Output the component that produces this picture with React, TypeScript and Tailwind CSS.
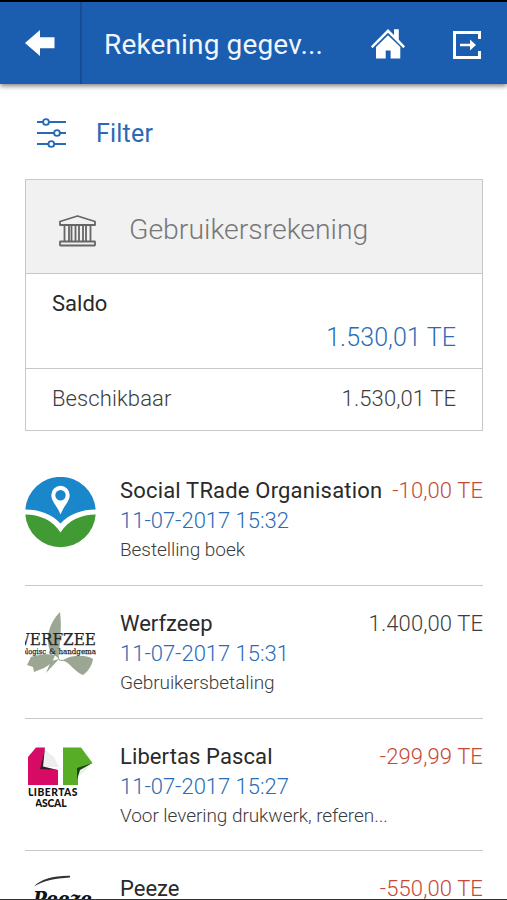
import type { ReactNode } from 'react'

type Transaction = {
  name: string
  date: string
  description: string
  amount: string
  negative: boolean
  nameClass: string
  logo: ReactNode
}

const transactions: Transaction[] = [
  {
    name: 'Social TRade Organisation',
    date: '11-07-2017 15:32',
    description: 'Bestelling boek',
    amount: '-10,00 TE',
    negative: true,
    nameClass: 'tracking-[0.18px]',
    logo: <StroLogo />,
  },
  {
    name: 'Werfzeep',
    date: '11-07-2017 15:31',
    description: 'Gebruikersbetaling',
    amount: '1.400,00 TE',
    negative: false,
    nameClass: 'tracking-normal',
    logo: <WerfzeepLogo />,
  },
  {
    name: 'Libertas Pascal',
    date: '11-07-2017 15:27',
    description: 'Voor levering drukwerk, referen...',
    amount: '-299,99 TE',
    negative: true,
    nameClass: 'tracking-[0.1px]',
    logo: <LibertasLogo />,
  },
  {
    name: 'Peeze',
    date: '11-07-2017 15:25',
    description: 'Gebruikersbetaling',
    amount: '-550,00 TE',
    negative: true,
    nameClass: 'tracking-normal',
    logo: <PeezeLogo />,
  },
]

export default function App() {
  return (
    <div className="h-[900px] w-[507px] overflow-hidden border-t-2 border-b border-t-black border-b-[#333] bg-white font-['Roboto',sans-serif] text-[#2a2a2a]">
      <Header />
      <main className="pr-[24px] pl-[25px]">
        <button className="mt-[31px] flex h-9 items-center pl-[11px] text-[#2a69b3]">
          <FilterIcon />
          <span className="ml-[29px] pt-[2px] text-[25px] leading-9 tracking-[0.2px]">Filter</span>
        </button>
        <AccountCard />
        <ul className="mt-[22px]">
          {transactions.map((t) => (
            <TransactionRow key={t.name} transaction={t} />
          ))}
        </ul>
      </main>
    </div>
  )
}

function Header() {
  return (
    <header className="flex h-[82px] items-center bg-[#1b5dae] text-white shadow-[0_2px_5px_rgba(0,0,0,0.5)]">
      <button className="flex h-full w-[82px] items-center border-r-2 border-[#174d92] pl-[25px]">
        <svg width="30" height="26" viewBox="0 0 30 26" fill="currentColor">
          <path d="M0 13 15 0V7.2H29.5V18.3H15V26Z" />
        </svg>
      </button>
      <h1 className="w-[289px] pt-[3px] pl-[22px] text-[28px] font-normal leading-[34px] tracking-[0.15px] whitespace-nowrap text-[#f0f6ff]">
        Rekening gegev...
      </h1>
      <svg className="mt-[2px]" width="34" height="30" viewBox="0 0 34 30" fill="currentColor">
        <path d="M1.5 19.2 0 17.3 17 0l6 6V.2h4.8v10.6L34 17.3l-1.6 1.9L17 3.8Z" />
        <path d="M5 17.9 17 6.3 29.3 17.9V29.5H19.6V21.5H14.7V29.5H5Z" />
      </svg>
      <svg className="mt-[3px] ml-[48px]" width="28" height="28" viewBox="0 0 28 28" fill="none">
        <path d="M26.5 8V1.5H1.5V26.5H26.5V20" stroke="currentColor" strokeWidth="3" />
        <path d="M7 12.8H17V8.5L23 14 17 19.5V15.2H7Z" fill="currentColor" />
      </svg>
    </header>
  )
}

function FilterIcon() {
  return (
    <svg className="mb-[1px]" width="31" height="30" viewBox="0 0 31 30" fill="none" stroke="currentColor" strokeWidth="1.9">
      <path d="M1 4H7M13 4H30M1 15H18M24 15H30M1 26H12M18 26H30" />
      <circle cx="10" cy="4" r="2.9" />
      <circle cx="21" cy="15" r="2.9" />
      <circle cx="15.3" cy="26" r="2.9" />
    </svg>
  )
}

function AccountCard() {
  return (
    <section className="mt-[28px] border border-[#c8c8c8]">
      <div className="flex h-[94px] items-center border-b border-[#c8c8c8] bg-[#f1f1f1] pt-1 pl-[33px] text-[#777]">
        <BankIcon />
        <h2 className="ml-[33px] pt-[2px] text-[28.4px] font-light leading-9">Gebruikersrekening</h2>
      </div>
      <div className="flex h-[95px] flex-col border-b border-[#c8c8c8] px-[26px] pt-[15px]">
        <span className="text-[22px] leading-[30px]">Saldo</span>
        <span className="mt-[2px] self-end text-[25px] font-light leading-[34px] tracking-[0.1px] text-[#2b6cb5]">
          1.530,01 TE
        </span>
      </div>
      <div className="flex h-[61px] items-center justify-between px-[26px] pb-[1px] text-[22px] font-light leading-[30px] tracking-[0.1px] text-[#3c3c3c]">
        <span>Beschikbaar</span>
        <span>1.530,01 TE</span>
      </div>
    </section>
  )
}

function BankIcon() {
  return (
    <svg className="mt-[4px] text-[#666]" width="37" height="32" viewBox="0 0 37 32" fill="none" stroke="currentColor" strokeWidth="1.8">
      <path d="M1 6.5 18.5 1 36 6.5V10H1Z" strokeLinejoin="round" />
      <path d="M5.5 10V26M10 10V26M12.5 10V26M16.5 10V26M20 10V26M24 10V26M27 10V26M31.5 10V26" />
      <rect x="1" y="26.5" width="35" height="4" rx="0.5" />
    </svg>
  )
}

function TransactionRow({ transaction: t }: { transaction: Transaction }) {
  return (
    <li className="flex h-[132.8px] border-b border-[#c8c8c8] pt-[23px]">
      <div className="mt-[1px] h-[71px] w-[71px] shrink-0">{t.logo}</div>
      <div className="ml-[24px] min-w-0 flex-1">
        <div className="flex justify-between text-[22px] leading-[30px] whitespace-nowrap">
          <span className={t.nameClass}>{t.name}</span>
          <span className={`font-light tracking-[0.1px] ${t.negative ? 'text-[#c64936]' : 'text-[#3c3c3c]'}`}>
            {t.amount}
          </span>
        </div>
        <div className="text-[22px] font-light leading-[30px] text-[#2b6cb5]">{t.date}</div>
        <div className="text-[19px] font-light leading-[28px] tracking-[-0.06px] text-[#3c3c3c]">{t.description}</div>
      </div>
    </li>
  )
}

function StroLogo() {
  return (
    <svg width="71" height="71" viewBox="0 0 71 71">
      <path d="M.3 32.5A35.3 35.3 0 0 1 70.7 32.5C57 32.5 44 37 35.5 46.5 27 37 14 32.5.3 32.5Z" fill="#1b87cb" />
      <path d="M.3 37.5C14 37.5 28 43 35.5 55.5 43 43 57 37.5 70.7 37.5A35.3 35.3 0 0 1 .3 37.5Z" fill="#419a34" />
      <path
        fillRule="evenodd"
        fill="#fff"
        d="M35.5 37.5C33 30 26.3 24.5 26.3 18a9.2 9.2 0 0 1 18.4 0C44.7 24.5 38 30 35.5 37.5ZM35.5 13a5.2 5.2 0 1 0 0 10.4 5.2 5.2 0 0 0 0-10.4Z"
      />
    </svg>
  )
}

function WerfzeepLogo() {
  return (
    <svg width="71" height="71" viewBox="0 0 71 71">
      <g fill="#9ba792">
        <path d="M35 2C24 13 20 28 25 41L33 48C35 34 37 18 35 2Z" />
        <path d="M30 45C22 43 11 45 6 47L2 55 8 57 9 62 19 58C25 55 29 50 30 45Z" />
        <path d="M26 51 21 63 34 49Z" />
        <path d="M32 41 34 50 42 51" fill="none" stroke="#9ba792" />
        <path d="M38 50C46 45 60 44 68 49C67 57 61 63 58 65C50 62 46 54 38 50Z" />
      </g>
      <g fill="#252525" stroke="#252525" strokeWidth="0.25" fontFamily="DejaVu Serif, serif">
        <text x="-11" y="34.5" fontSize="17.5" textLength="82" lengthAdjust="spacingAndGlyphs">
          WERFZEE
        </text>
        <text x="-3" y="43.5" fontSize="7.5" textLength="24" lengthAdjust="spacingAndGlyphs">
          ologisc
        </text>
        <text x="24" y="43.5" fontSize="7.5">
          &amp;
        </text>
        <text x="33.5" y="43.5" fontSize="7.5" textLength="37.5" lengthAdjust="spacingAndGlyphs">
          handgema
        </text>
      </g>
    </svg>
  )
}

function LibertasLogo() {
  return (
    <svg width="71" height="71" viewBox="0 0 71 71">
      <path d="M17 4.5 29 14 34 24 18 24Z" fill="#eee" />
      <path d="M68 17 61 27 54 33V26L50 23Z" fill="#eee" />
      <path d="M11 4.5H20L16 25 33 27V42H3V14Z" fill="#d70b65" />
      <path d="M20 4.5 15 26 33 27 18 23.5Z" fill="#3b1426" />
      <path d="M38 4.5H56L67.5 20 53 26V42H38Z" fill="#58ad27" />
      <path d="M67.5 20 52 25V37L55 27Z" fill="#17480e" />
      <g fill="#111" fontFamily="Lato, sans-serif" fontSize="10.3" fontWeight="900">
        <text x="3" y="52.8" textLength="49.5">
          LIBERTAS
        </text>
        <text x="10" y="63.8" textLength="31.5">
          ASCAL
        </text>
      </g>
      <path d="M1 47 12 64.5H5L1 57Z" fill="#fff" />
    </svg>
  )
}

function PeezeLogo() {
  return (
    <svg width="71" height="71" viewBox="0 0 71 71">
      <path d="M9 11.5C15 4.5 29 .5 45 .8V2.4C30 3.2 17 6 9 11.5Z" fill="#333" />
      <text
        x="8"
        y="30.5"
        fontFamily="DejaVu Serif, serif"
        fontSize="20"
        fontWeight="700"
        fontStyle="italic"
        textLength="59"
        lengthAdjust="spacingAndGlyphs"
        fill="#111"
      >
        Peeze
      </text>
    </svg>
  )
}
